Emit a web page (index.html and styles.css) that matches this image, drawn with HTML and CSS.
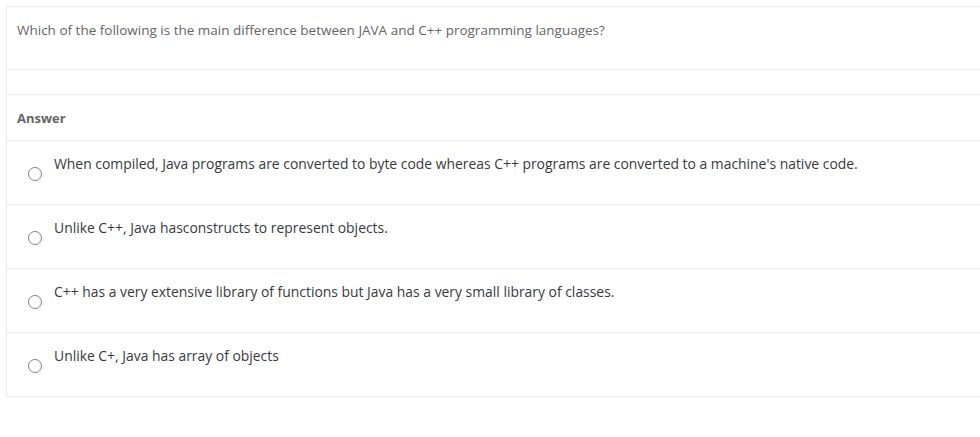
FILE: index.html
```html
<!DOCTYPE html>
<html>
<head>
<meta charset="utf-8">
<link rel="stylesheet" href="styles.css">
</head>
<body>
<div class="quiz">
  <div class="row question">Which of the following is the main difference between JAVA and C++ programming languages?</div>
  <div class="row spacer"></div>
  <div class="row answer-head">Answer</div>
  <div class="row option">
    <span class="radio"></span>
    <span class="label">When compiled, Java programs are converted to byte code whereas C++ programs are converted to a machine's native code.</span>
  </div>
  <div class="row option">
    <span class="radio"></span>
    <span class="label">Unlike C++, Java hasconstructs to represent objects.</span>
  </div>
  <div class="row option">
    <span class="radio"></span>
    <span class="label">C++ has a very extensive library of functions but Java has a very small library of classes.</span>
  </div>
  <div class="row option">
    <span class="radio"></span>
    <span class="label">Unlike C+, Java has array of objects</span>
  </div>
</div>
</body>
</html>
```

FILE: styles.css
```css
html, body {
  margin: 0;
  padding: 0;
  background: #fff;
}
body {
  padding: 6px 0 0 6px;
  font-family: "Open Sans", "Noto Sans", sans-serif;
  font-size: 13px;
  overflow: hidden;
}
.quiz {
  border: 1px solid #ebebeb;
  border-right: none;
  width: 1000px;
}
.row {
  border-top: 1px solid #ebebeb;
  box-sizing: border-box;
}
.row:first-child {
  border-top: none;
}
.question {
  height: 62px;
  padding: 13px 10px 0 10px;
  color: #666;
  font-size: 13.5px;
  line-height: 20px;
}
.spacer {
  height: 25px;
}
.answer-head {
  height: 46px;
  padding: 13px 10px 0 10px;
  line-height: 20px;
  font-weight: 700;
  color: #666;
}
.option {
  height: 64px;
  display: flex;
  align-items: flex-start;
  padding: 13px 0 0 21px;
  color: #373a3c;
}
.radio {
  width: 14px;
  height: 14px;
  border: 1px solid #808080;
  border-radius: 50%;
  box-sizing: border-box;
  margin-top: 13px;
  flex: none;
}
.label {
  margin-left: 12px;
  font-size: 13.9px;
  line-height: 20px;
}
```
